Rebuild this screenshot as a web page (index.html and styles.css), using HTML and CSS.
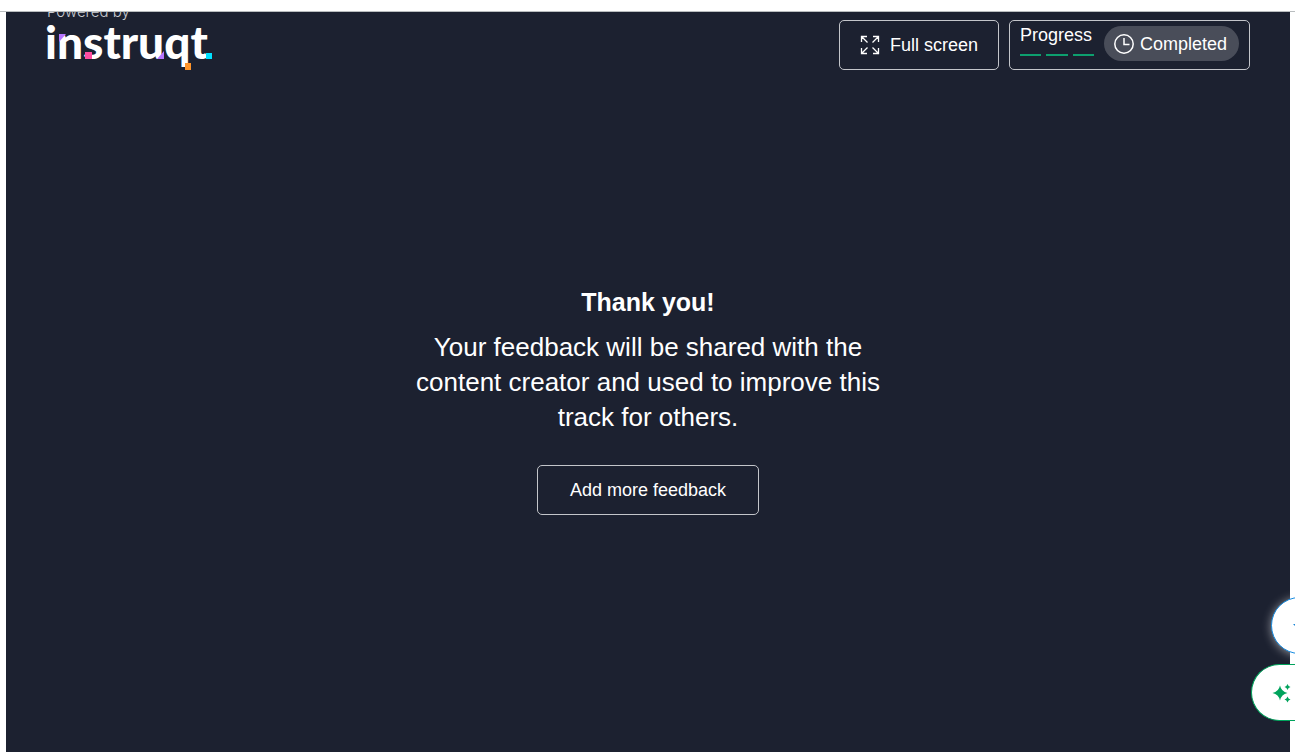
FILE: index.html
```html
<!DOCTYPE html>
<html lang="en">
<head>
<meta charset="utf-8">
<title>Instruqt</title>
<link rel="stylesheet" href="styles.css">
</head>
<body>
<div class="player">
  <header class="topbar">
    <a class="brand" href="#">
      <span class="powered">Powered by</span>
      <svg class="logo" width="168" height="46" viewBox="0 4 168 46" role="img" aria-label="instruqt">
        <text class="wordmark" x="-2" y="39">instruqt</text>
        <path fill="#b676ff" d="M12 14h7l-7 8z M117 39v-8l-7 8z"/>
        <path fill="#ff4da0" d="M38 32h7v7h-7z"/>
        <path fill="#ff9429" d="M138 43h6v7h-6z"/>
        <path fill="#00e0ff" d="M159 33h6v6h-6z"/>
      </svg>
    </a>
    <div class="actions">
      <button class="btn fullscreen" type="button">
        <svg width="20" height="20" viewBox="0 0 20 20" fill="none" stroke="#fff" stroke-width="1.3" aria-hidden="true">
          <path d="M1.5 7V1.5H7M1.5 1.5L7.5 7.5M13 1.5h5.500V7M18.500 1.500L12.500 7.500M1.500 13v5.500H7M1.500 18.500L7.500 12.500M13 18.500h5.500V13M18.500 18.500L12.500 12.500"/>
        </svg>
        Full screen
      </button>
      <div class="progress">
        <div class="steps">
          <span class="label">Progress</span>
          <div class="bars"><i></i><i></i><i></i></div>
        </div>
        <div class="status">
          <svg width="20" height="20" viewBox="0 0 20 20" fill="none" stroke="#fff" stroke-width="1.5" aria-hidden="true">
            <circle cx="10" cy="10" r="9.200"/><path d="M10 4v6.500h5.500"/>
          </svg>
          Completed
        </div>
      </div>
    </div>
  </header>
  <main class="message">
    <h1>Thank you!</h1>
    <p>Your feedback will be shared with the content creator and used to improve this track for others.</p>
    <button class="btn more" type="button">Add more feedback</button>
  </main>
</div>
<div class="floating">
  <button class="fab blue" type="button" aria-label="Scroll">
    <svg width="14" height="10" viewBox="0 0 14 10" aria-hidden="true"><path d="M1 3h12L7 9z" fill="#1684d8"/></svg>
  </button>
  <button class="fab green" type="button" aria-label="Assistant">
    <svg width="20" height="20" viewBox="0 0 20 20" fill="#00a35c" aria-hidden="true">
      <path d="M8 2.500Q9.300 8.700 15.500 10Q9.300 11.300 8 17.500Q6.700 11.300 .5 10Q6.700 8.700 8 2.500z"/>
      <path d="M15.500 1Q16.200 3.300 18.500 4Q16.200 4.700 15.500 7Q14.800 4.700 12.500 4Q14.800 3.300 15.500 1zM15.500 13.500Q16.200 15.800 18.500 16.500Q16.200 17.200 15.500 19.500Q14.800 17.200 12.500 16.500Q14.800 15.800 15.500 13.500z"/>
    </svg>
  </button>
</div>
</body>
</html>
```
FILE: styles.css
```css
* { box-sizing: border-box; }
body {
  margin: 0;
  min-height: 100vh;
  padding-top: 11px;
  display: flex;
  flex-direction: column;
  overflow: hidden;
  background: #fff;
  color: #fff;
  font-family: "Liberation Sans", Arial, sans-serif;
}
body::before { content: ""; height: 1px; background: #b9bdbf; }
.player {
  flex: 1;
  display: flex;
  flex-direction: column;
  margin: 0 5px 0 6px;
  background: #1c2130;
  overflow: hidden;
}
.topbar {
  display: flex;
  justify-content: space-between;
  align-items: flex-start;
  padding: 0 40px 0 41px;
}
.brand { display: flex; flex-direction: column; gap: 4px; color: #c9cbd1; text-decoration: none; }
.powered { margin-top: -8px; font: 300 15px/16px Inter, sans-serif; }
.logo { display: block; overflow: visible; }
.wordmark { font: 900 46px Lato, sans-serif; fill: #fff; }
.actions { display: flex; gap: 10px; padding-top: 8px; }
.btn, .progress {
  display: flex;
  align-items: center;
  height: 50px;
  border: 1px solid #c3c5ca;
  border-radius: 5px;
  background: transparent;
  color: #fff;
  font: 18px/24px "Liberation Sans", Arial, sans-serif;
}
.fullscreen { gap: 10px; padding: 0 20px; }
.progress { gap: 10px; padding: 0 10px; }
.steps {
  display: flex;
  flex-direction: column;
  gap: 9px;
  min-width: 74px;
  padding-bottom: 10px;
}
.label { line-height: 20px; }
.bars { display: flex; gap: 5px; height: 2px; }
.bars i { flex: 1; background: #0d9f6e; }
.status {
  display: flex;
  align-items: center;
  gap: 6px;
  height: 35px;
  margin-bottom: 3px;
  padding: 0 12px 0 10px;
  border-radius: 18px;
  background: #494d59;
}
.message {
  flex: 1;
  display: flex;
  flex-direction: column;
  align-items: center;
  padding-top: 215px;
  text-align: center;
}
.message h1 { margin: 0; font: bold 25px/35px "Liberation Sans", Arial, sans-serif; }
.message p { max-width: 490px; margin: 10px 0 30px; font-size: 26px; line-height: 35px; }
.more { padding: 0 32px; }
.floating {
  position: fixed;
  right: 0;
  bottom: 31px;
  display: flex;
  flex-direction: column;
  align-items: flex-end;
  gap: 10px;
}
.fab {
  display: flex;
  align-items: center;
  height: 57px;
  padding: 0;
  border: 1px solid #00a35c;
  border-radius: 29px;
  background: #fff;
}
.fab svg { flex: none; }
.green {
  width: 44px;
  padding-left: 20px;
  border-right: 0;
  border-radius: 29px 0 0 29px;
}
.blue {
  width: 57px;
  margin-right: -33px;
  padding-left: 20px;
  border-color: #168be0;
  box-shadow: 0 1px 10px #ffffff80;
}
```
